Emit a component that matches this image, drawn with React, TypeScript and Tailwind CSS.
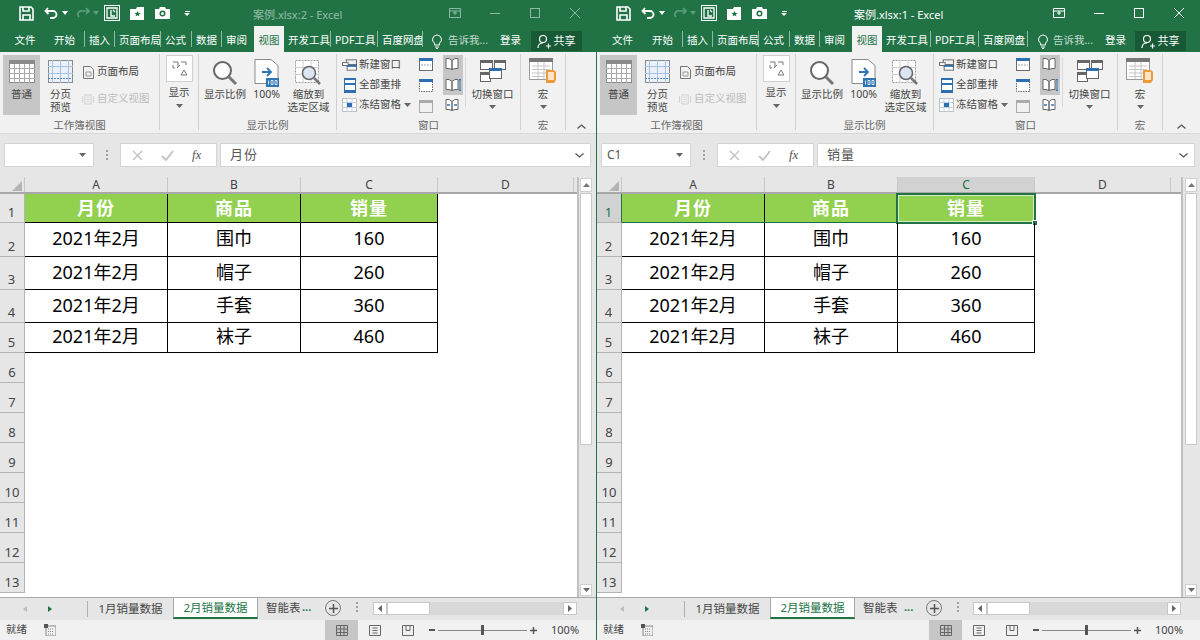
import React from 'react';

const FONT = '"Noto Sans", "Noto Sans CJK SC", sans-serif';

const ROWS = [
  { n: 1, h: 'h-[29px]', cells: ['月份', '商品', '销量'] },
  { n: 2, h: 'h-[34px]', cells: ['2021年2月', '围巾', '160'] },
  { n: 3, h: 'h-[33px]', cells: ['2021年2月', '帽子', '260'] },
  { n: 4, h: 'h-[33px]', cells: ['2021年2月', '手套', '360'] },
  { n: 5, h: 'h-[30px]', cells: ['2021年2月', '袜子', '460'] },
];
const EMPTY_ROWS = [6, 7, 8, 9, 10, 11, 12, 13];
const COL_W = ['w-[143px]', 'w-[133px]', 'w-[137px]'];

const Caret = ({ className = '' }: { className?: string }) => (
  <svg width="7" height="4" viewBox="0 0 7 4" className={className}><path d="M0 0h7L3.5 4z" fill="#666" /></svg>
);

const Save = () => (
  <svg width="15" height="15" viewBox="0 0 15 15" fill="none" stroke="#fff" strokeWidth="1.6">
    <path d="M1 1h11l2 2v11H1z" /><path d="M4 1v4h6V1M4 14V9h7v5" />
  </svg>
);

function TitleBar({ active, title, titleX }: { active: boolean; title: string; titleX: string }) {
  const dim = active ? 'opacity-100' : 'opacity-50';
  return (
    <div className="h-[26px] flex items-center text-white">
      <div className="w-[19px]" />
      <Save />
      <div className="w-[10px]" />
      <svg width="15" height="14" viewBox="0 0 15 14" fill="none" stroke="#fff" strokeWidth="1.8">
        <path d="M4 2L1.5 5 4.5 8M2 5h7a3.5 3.5 0 0 1 0 7H6" />
      </svg>
      <svg width="6" height="4" viewBox="0 0 6 4" className="ml-[3px]"><path d="M0 0h6L3 4z" fill="#fff" /></svg>
      <svg width="14" height="12" viewBox="0 0 14 12" fill="none" stroke="#5d9f7d" strokeWidth="1.6" className="ml-[8px]">
        <path d="M10 1l3 3-3 3M13 4H6a3.5 3.5 0 0 0-3 6" />
      </svg>
      <svg width="6" height="4" viewBox="0 0 6 4" className="ml-[3px]"><path d="M0 0h6L3 4z" fill="#5d9f7d" /></svg>
      <div className="ml-[5px] w-[16px] h-[16px] border border-white flex items-center justify-center">
        <svg width="12" height="12" viewBox="0 0 12 12" fill="none" stroke="#fff" strokeWidth="1.3"><path d="M1 1h10v10H1zM5 3v6h4M7 3l2 2" /></svg>
      </div>
      <svg width="15" height="13" viewBox="0 0 15 13" className="ml-[10px]">
        <path d="M0 2h6l1-2h7v13H0z" fill="#fff" /><path d="M7.5 4l1 2h2l-1.600 1.400.6 2.100-2-1.200-2 1.200.6-2.100L4.500 6h2z" fill="#217346" />
      </svg>
      <svg width="15" height="12" viewBox="0 0 15 12" className="ml-[10px]">
        <path d="M0 2h4l1-2h5l1 2h4v10H0z" fill="#fff" /><circle cx="7.500" cy="6.500" r="3" fill="#217346" /><circle cx="7.500" cy="6.500" r="1.500" fill="#fff" />
      </svg>
      <div className="ml-[14px] flex flex-col items-center gap-[1px]">
        <div className="w-[5px] h-px bg-white" />
        <svg width="6" height="3" viewBox="0 0 6 3"><path d="M0 0h6L3 3z" fill="#fff" /></svg>
      </div>
      <div className={`absolute ${titleX} mt-[5px] text-[11px] whitespace-nowrap ${dim}`}>{title}</div>
      <div className={`ml-auto flex items-center ${dim}`}>
        <svg width="12" height="10" viewBox="0 0 12 10" fill="none" stroke="#fff" className="mr-[29px]">
          <path d="M.5.5h11v9H.5zM.5 3h11M6 3v4M4 5h4" />
        </svg>
        <div className="w-[10px] h-px bg-white mr-[30px]" />
        <div className="w-[10px] h-[10px] border border-white mr-[30px]" />
        <svg width="10" height="10" viewBox="0 0 10 10" stroke="#fff" className="mr-[16px]"><path d="M0 0l10 10M10 0L0 10" /></svg>
      </div>
    </div>
  );
}

function TabRow({ widths, fileW, bulbMl, askMl, shareMl }: { widths: number[]; fileW: string; bulbMl: string; askMl: string; shareMl: string }) {
  const tabs = ['开始', '插入', '页面布局', '公式', '数据', '审阅', '视图', '开发工具', 'PDF工具', '百度网盘'];
  return (
    <div className="h-[26px] flex items-end text-[10.5px] text-white">
      <div className={`${fileW} h-full flex items-center justify-center pt-[4px]`}>文件</div>
      {tabs.map((t, i) => (
        <div
          key={t}
          style={{ width: widths[i] }}
          className={
            t === '视图'
              ? 'h-[26px] pt-[4px] bg-[#f1f1f1] text-[#217346] flex items-center justify-center overflow-hidden'
              : 'h-[26px] pt-[4px] flex items-center pl-[4px] overflow-hidden whitespace-nowrap relative'
          }
        >
          <span className="shrink-0">{t}</span>
          {t !== '视图' && t !== '审阅' && <div className="absolute right-0 top-[5px] h-[16px] w-px bg-[#8fb9a2]" />}
        </div>
      ))}
      <div className={`h-full flex items-center pt-[4px] ${bulbMl}`}>
        <svg width="12" height="15" viewBox="0 0 12 15" fill="none" stroke="#fff"><path d="M6 1a4.500 4.500 0 0 0-2.500 8.200V11h5V9.200A4.500 4.500 0 0 0 6 1zM4 13h4M5 14.500h2" /></svg>
        <span className={`${askMl} text-[#c4dccf]`}>告诉我...</span>
        <span className="ml-[12px]">登录</span>
      </div>
      <div className={`h-[20px] mb-[1px] w-[51px] ${shareMl} bg-[#195a36] flex items-center justify-center gap-[2px]`}>
        <svg width="14" height="15" viewBox="0 0 14 15" fill="none" stroke="#fff" strokeWidth="1.200"><circle cx="6" cy="5" r="3.500" /><path d="M1 14c0-3 2-5 5-5M9 12h5M11.500 9.500v5" /></svg>
        <span className="text-[11px]">共享</span>
      </div>
    </div>
  );
}

const GridIcon = () => (
  <svg width="26" height="23" viewBox="0 0 26 23">
    <rect x=".5" y=".5" width="25" height="22" fill="#fff" stroke="#8a8a8a" />
    <rect x="0" y="0" width="26" height="4" fill="#8a8a8a" />
    <path d="M5.500 4v19M10.500 4v19M15.500 4v19M20.500 4v19M0 8.500h26M0 13.500h26M0 18.500h26" stroke="#a9a9a9" />
  </svg>
);
const PageBreakIcon = () => (
  <svg width="25" height="23" viewBox="0 0 25 23">
    <rect x=".5" y=".5" width="24" height="22" fill="#eaf1fa" stroke="#8a8a8a" />
    <path d="M4.500 0v23M12.500 0v23M20.500 0v23M0 6.500h25M0 13.500h25" stroke="#a8c1e0" />
    <path d="M0 18.500h25" stroke="#5b8ac4" strokeDasharray="2 1" />
  </svg>
);
const SmallPage = () => (
  <svg width="11" height="13" viewBox="0 0 11 13" fill="none" stroke="#777"><path d="M.5.5h7l3 3v9H.5z" /><path d="M3 6h5v4H3z" stroke="#999" /></svg>
);
const CustomView = () => (
  <svg width="13" height="13" viewBox="0 0 13 13" fill="none" stroke="#cfcfcf"><path d="M3 1.500h7v10H3zM.5 3v7M12.500 3v7M5 4h3M5 6.500h3M5 9h3" /></svg>
);
const Magnifier = () => (
  <svg width="26" height="26" viewBox="0 0 26 26" fill="none"><circle cx="10.500" cy="10.500" r="8.500" stroke="#666" strokeWidth="2" fill="#fff" /><path d="M17 17l7 7" stroke="#777" strokeWidth="3" /></svg>
);
const Hundred = () => (
  <svg width="26" height="28" viewBox="0 0 26 28">
    <path d="M1 .5h16l7 6v18H1z" fill="#fff" stroke="#8a8a8a" />
    <path d="M8 13h9M13 9l4 4-4 4" fill="none" stroke="#2f75b5" strokeWidth="1.800" />
    <rect x="12" y="19" width="13" height="9" fill="#2f75b5" />
    <path d="M14.500 21.500v4M17 21.500h2v4h-2zM21 21.500h2v4h-2z" fill="none" stroke="#fff" strokeWidth=".8" />
  </svg>
);
const ZoomSel = () => (
  <svg width="27" height="27" viewBox="0 0 27 27">
    <rect x=".5" y=".5" width="23" height="22" fill="#fff" stroke="#9a9a9a" strokeDasharray="2 1" />
    <path d="M0 7.500h24M0 14.500h24M8 0v23M16 0v23" stroke="#cfcfcf" />
    <circle cx="14" cy="13" r="6.500" fill="#dce6f2" stroke="#666" strokeWidth="1.500" />
    <path d="M19 18l6 6" stroke="#777" strokeWidth="2.500" />
  </svg>
);
const TwoWin = ({ kind }: { kind: number }) => (
  <svg width="14" height="13" viewBox="0 0 14 13">
    <rect x=".5" y=".5" width="13" height="12" fill={kind === 2 ? '#f1f1f1' : '#fff'} stroke={kind === 2 ? '#aaa' : '#6a6a6a'} strokeDasharray={kind === 1 ? '1.500 1' : undefined} />
    <rect x="0" y="0" width="14" height="3" fill={kind === 2 ? '#aaa' : '#2f6fb0'} />
    {kind === 0 && <path d="M2 7h10" stroke="#8aa9cc" strokeDasharray="2 1" />}
  </svg>
);
const Book = ({ mark }: { mark?: string }) => (
  <svg width="16" height="12" viewBox="0 0 16 12" fill="none" stroke="#666">
    <path d="M7 2.500L4 .5H1v10h3l3 1zM7 2.500L10 .5h3v10h-3l-3 1z" fill="#fff" />
    {mark === 'sync' && <path d="M15 0v12M13.800 1.500L15 0l1.200 1.500M13.800 10.500L15 12l1.200-1.500" stroke="#2f75b5" />}
    {mark === 'reset' && <path d="M2 6h3M9 6h3" stroke="#2f75b5" strokeWidth="1.500" />}
  </svg>
);
const NewWin = () => (
  <svg width="16" height="12" viewBox="0 0 16 12" fill="none">
    <rect x="4.500" y=".5" width="11" height="5" stroke="#666" />
    <rect x=".5" y="3.500" width="6" height="3" fill="#fff" stroke="#666" />
    <rect x="5.500" y="6.500" width="10" height="5" fill="#fff" stroke="#666" />
    <rect x="5" y="6" width="11" height="2" fill="#2f6fb0" />
  </svg>
);
const Arrange = () => (
  <svg width="12" height="15" viewBox="0 0 12 15"><rect x=".5" y=".5" width="11" height="14" fill="#fff" stroke="#2f6fb0" /><rect y="5" width="12" height="2" fill="#2f6fb0" /><rect y="12" width="12" height="2" fill="#2f6fb0" /><rect width="12" height="2" fill="#2f6fb0" /></svg>
);
const Freeze = () => (
  <svg width="15" height="14" viewBox="0 0 15 14"><rect x=".5" y=".5" width="14" height="13" fill="#fff" stroke="#888" strokeDasharray="1 1" /><path d="M0 4.500h15M0 9.500h15M5 0v14M10 0v14" stroke="#bdd0e6" /><rect x="5" y="5" width="5" height="4" fill="#2f6fb0" /></svg>
);
const Switch = () => (
  <svg width="26" height="22" viewBox="0 0 26 22">
    <rect x=".5" y=".5" width="12" height="9" fill="#fff" stroke="#666" /><rect width="13" height="3" fill="#666" />
    <rect x="14.500" y=".5" width="11" height="9" fill="#fff" stroke="#666" /><rect x="14" width="12" height="3" fill="#666" />
    <rect x=".5" y="12.500" width="10" height="9" fill="#fff" stroke="#666" /><rect y="12" width="11" height="3" fill="#666" />
    <rect x="9.500" y="8.500" width="12" height="10" fill="#fff" stroke="#666" /><rect x="9" y="8" width="13" height="3" fill="#2f6fb0" />
  </svg>
);
const Macro = () => (
  <svg width="28" height="26" viewBox="0 0 28 26">
    <rect x=".5" y=".5" width="23" height="21" fill="#fff" stroke="#9a9a9a" /><rect width="24" height="4" fill="#777" />
    <path d="M3 8h18M3 11.500h18M3 15h18M3 18.500h12M9 4v17M15 4v17" stroke="#c5c5c5" />
    <path d="M17 12h8l2 2v8l-2 3h-8z" fill="#ed9b3a" />
    <path d="M19 14h6v8h-6z" fill="#fbe3c7" />
  </svg>
);
const Vdiv = () => <div className="w-px h-[76px] bg-[#d0d0d0] mt-[2px] shrink-0" />;

function Big({ w, icon, lines, arrow, top = 'pt-[6px]', labelMt = 'mt-[1px]' }: { w: string; icon: React.ReactNode; lines: string[]; arrow?: boolean; top?: string; labelMt?: string }) {
  return (
    <div className={`${w} h-[66px] flex flex-col items-center shrink-0 ${top}`}>
      <div className="h-[28px] flex items-center justify-center">{icon}</div>
      <div className={`${labelMt} flex flex-col items-center text-[10.5px] leading-[13px] whitespace-nowrap`}>
        {lines.map(l => <span key={l}>{l}</span>)}
        {arrow && <Caret className="mt-[4px]" />}
      </div>
    </div>
  );
}

const GroupLabel = ({ children }: { children: string }) => (
  <div className="absolute bottom-[1px] left-0 right-0 text-center text-[10.5px] leading-[14px] text-[#666]">{children}</div>
);

function SmallBtn({ icon, text, dim, caret, iw, ml }: { icon: React.ReactNode; text: string; dim?: boolean; caret?: boolean; iw: string; ml: string }) {
  return (
    <div className={`h-[20px] flex items-center text-[10.5px] whitespace-nowrap ${dim ? 'text-[#bdbdbd]' : ''}`}>
      <div className={`${iw} flex justify-center`}>{icon}</div>
      <span className={ml}>{text}</span>
      {caret && <Caret className="ml-[3px]" />}
    </div>
  );
}

function Ribbon({ collapseW }: { collapseW: string }) {
  return (
    <div className="h-[82px] bg-[#f1f1f1] flex text-[#444] border-b border-[#d8d8d8]">
      {/* 工作簿视图 */}
      <div className="w-[159px] relative flex pl-[3px] pt-[3px] shrink-0">
        <div className="w-[37px] h-[60px] bg-[#c6c6c6] flex flex-col items-center pt-[5px]">
          <GridIcon />
          <span className="text-[10.5px] leading-[13px] mt-[5px]">普通</span>
        </div>
        <div className="w-[43px] flex flex-col items-center pt-[5px] ml-[-1px]">
          <PageBreakIcon />
          <span className="text-[10.5px] leading-[13px] mt-[5px]">分页</span>
          <span className="text-[10.5px] leading-[13px]">预览</span>
        </div>
        <div className="flex flex-col pt-[7px] gap-[7px]">
          <SmallBtn iw="w-[12px]" ml="ml-[3px]" icon={<SmallPage />} text="页面布局" />
          <SmallBtn iw="w-[12px]" ml="ml-[3px]" icon={<CustomView />} text="自定义视图" dim />
        </div>
        <GroupLabel>工作簿视图</GroupLabel>
      </div>
      <Vdiv />
      {/* 显示 */}
      <div className="w-[38px] flex flex-col items-center pt-[3px] shrink-0">
        <div className="w-[27px] h-[27px] border border-[#d0d0d0] bg-white flex items-center justify-center">
          <svg width="15" height="15" viewBox="0 0 15 15" fill="none" stroke="#777"><path d="M1 1h5v5M3 7l-2 0v-3M9 14l3-5 3 5zM9 1h5v3M8 4l-3 3" /></svg>
        </div>
        <span className="text-[10.5px] leading-[13px] mt-[4px]">显示</span>
        <Caret className="mt-[5px]" />
      </div>
      <Vdiv />
      {/* 显示比例 */}
      <div className="w-[137px] relative flex pt-[1px] pl-[4px] shrink-0">
        <Big w="w-[44px]" icon={<Magnifier />} lines={['显示比例']} />
        <Big w="w-[39px]" icon={<Hundred />} lines={['100%']} />
        <Big w="w-[45px]" icon={<ZoomSel />} lines={['缩放到', '选定区域']} />
        <GroupLabel>显示比例</GroupLabel>
      </div>
      <Vdiv />
      {/* 窗口 */}
      <div className="w-[183px] relative flex pl-[5px] pt-[3px] shrink-0">
        <div className="flex flex-col w-[71px] shrink-0">
          <SmallBtn iw="w-[15px]" ml="ml-[2px]" icon={<NewWin />} text="新建窗口" />
          <SmallBtn iw="w-[15px]" ml="ml-[2px]" icon={<Arrange />} text="全部重排" />
          <SmallBtn iw="w-[15px]" ml="ml-[2px]" icon={<Freeze />} text="冻结窗格" caret />
        </div>
        <div className="flex flex-col w-[25px] items-center shrink-0 pt-[3px] gap-[8px]">
          <TwoWin kind={0} />
          <TwoWin kind={1} />
          <TwoWin kind={2} />
        </div>
        <div className="w-[20px] ml-[5px] flex flex-col shrink-0 items-center">
          <div className="w-full h-[40px] bg-[#c6c6c6] flex flex-col items-center pt-[3px] gap-[9px]">
            <Book />
            <Book mark="sync" />
          </div>
          <div className="mt-[4px]"><Book mark="reset" /></div>
        </div>
        <div className="w-px h-[50px] bg-[#d8d8d8] ml-[2px] mt-[2px]" />
        <Big w="w-[53px]" top="pt-[2px]" labelMt="mt-[3px]" icon={<Switch />} lines={['切换窗口']} arrow />
        <GroupLabel>窗口</GroupLabel>
      </div>
      <Vdiv />
      {/* 宏 */}
      <div className="w-[44px] relative shrink-0 flex justify-center pt-[3px]">
        <Big w="w-[40px]" top="pt-[2px]" labelMt="mt-[3px]" icon={<Macro />} lines={['宏']} arrow />
        <GroupLabel>宏</GroupLabel>
      </div>
      <Vdiv />
      <div className={`${collapseW} flex items-end pb-[4px] justify-center`}>
        <svg width="9" height="5" viewBox="0 0 9 5" fill="none" stroke="#555" strokeWidth="1.300"><path d="M.5 4.500l4-3.500 4 3.500" /></svg>
      </div>
    </div>
  );
}

function FormulaBar({ name, value, inputW }: { name: string; value: string; inputW: string }) {
  return (
    <div className="h-[43px] bg-[#e6e6e6] flex pt-[9px] pl-[4px] shrink-0">
      <div className="w-[90px] h-[24px] bg-white border border-[#d4d4d4] flex items-center justify-between pl-[5px] pr-[7px] text-[12px] text-[#555]">
        <span>{name}</span>
        <Caret />
      </div>
      <div className="w-[26px] flex justify-center items-center h-[24px]">
        <div className="flex flex-col gap-[2px]">
          <div className="w-[2px] h-[2px] bg-[#a0a0a0]" /><div className="w-[2px] h-[2px] bg-[#a0a0a0]" /><div className="w-[2px] h-[2px] bg-[#a0a0a0]" />
        </div>
      </div>
      <div className="w-[97px] h-[24px] bg-white border border-[#d4d4d4] flex items-center">
        <svg width="11" height="11" viewBox="0 0 11 11" stroke="#c2c2c2" strokeWidth="1.300" className="ml-[11px]"><path d="M1 1l9 9M10 1L1 10" /></svg>
        <svg width="13" height="11" viewBox="0 0 13 11" fill="none" stroke="#c2c2c2" strokeWidth="1.800" className="ml-[18px]"><path d="M1 6l4 4 7-9" /></svg>
        <span className="ml-[18px] text-[13px] italic text-[#555] font-['Liberation_Serif',serif]">fx</span>
      </div>
      <div className={`${inputW} h-[24px] ml-[3px] bg-white border border-[#d4d4d4] flex items-center pl-[9px] pr-[6px] text-[13px] text-[#555] justify-between`}>
        <span className="tracking-[1px]">{value}</span>
        <svg width="9" height="5" viewBox="0 0 9 5" fill="none" stroke="#555" strokeWidth="1.300"><path d="M.5.5l4 3.500 4-3.500" /></svg>
      </div>
    </div>
  );
}

function Sheet({ selected, scrollPl }: { selected: boolean; scrollPl: string }) {
  return (
    <div className="flex-1 flex min-h-0 bg-white">
      <div className="flex-1 min-w-0 flex flex-col overflow-hidden">
        <div className="h-[17px] flex bg-[#e6e6e6] border-b-2 border-[#a8a8a8] text-[12px] leading-[16px] text-[#444] shrink-0">
          <div className="w-[25px] border-r border-[#c8c8c8] flex items-end justify-end pr-[2px] pb-[1px]">
            <svg width="10" height="10" viewBox="0 0 10 10"><path d="M10 0v10H0z" fill="#b4b4b4" /></svg>
          </div>
          {['A', 'B', 'C'].map((c, i) => (
            <div key={c} className={`${COL_W[i]} border-r border-[#c8c8c8] text-center ${selected && c === 'C' ? 'bg-[#d2d2d2] text-[#217346]' : ''}`}>{c}</div>
          ))}
          <div className="w-[136px] border-r border-[#c8c8c8] text-center">D</div>
        </div>
        {ROWS.map(r => (
          <div key={r.n} className={`${r.h} flex shrink-0`}>
            <div className={`w-[25px] border-r border-b border-[#b4b4b4] flex items-end justify-center text-[13px] leading-[20px] pr-[1px] ${selected && r.n === 1 ? 'bg-[#d2d2d2] text-[#217346] border-r-[#217346]' : 'bg-[#e6e6e6] text-[#444]'}`}>{r.n}</div>
            {r.cells.map((c, i) => (
              <div
                key={i}
                className={`${COL_W[i]} relative flex items-center justify-center border-r border-b text-[18px] ${selected && r.n === 1 ? 'border-b-[#1f6b42]' : ''} ${r.n === 1 ? 'bg-[#92d050] text-white font-bold tracking-[1px] border-black' : 'text-black border-black pb-[2px]'}`}
              >
                {c}
                {selected && r.n === 1 && i === 2 && (
                  <>
                    <div className="absolute left-[-2px] right-[-2px] top-[-1px] bottom-[-2px] border-2 border-[#217346]" />
                    <div className="absolute left-[0px] right-[0px] top-[1px] bottom-[0px] border border-[#d5ecc0]" />
                    <div className="absolute right-[-4px] bottom-[-4px] w-[6px] h-[6px] bg-[#217346] border border-white" />
                  </>
                )}
              </div>
            ))}
          </div>
        ))}
        {EMPTY_ROWS.map(n => (
          <div key={n} className="h-[30px] flex shrink-0">
            <div className="w-[25px] bg-[#e6e6e6] border-r border-b border-[#b4b4b4] flex items-end justify-center text-[13px] leading-[20px] text-[#444]">{n}</div>
          </div>
        ))}
      </div>
      <div className={`w-[19px] bg-[#e6e6e6] border-l-2 border-[#c0c0c0] flex flex-col shrink-0 pt-[1px] ${scrollPl}`}>
        <div className="h-[14px] w-[12px] bg-white border border-[#d0d0d0] flex items-center justify-center">
          <svg width="7" height="4" viewBox="0 0 7 4"><path d="M0 4h7L3.500 0z" fill="#777" /></svg>
        </div>
        <div className="mt-[1px] h-[252px] w-[12px] bg-white border border-[#c8c8c8]" />
        <div className="mt-auto mb-[1px] h-[12px] w-[12px] bg-white border border-[#d0d0d0] flex items-center justify-center">
          <Caret />
        </div>
      </div>
    </div>
  );
}

function SheetTabs({ thirdW, dotsW, plusW, trackW }: { thirdW: string; dotsW: string; plusW: string; trackW: string }) {
  return (
    <div className="h-[23px] bg-[#e6e6e6] flex text-[11.5px] text-[#444] shrink-0 border-t border-[#a8a8a8]">
      <div className="w-[88px] flex items-center shrink-0 border-r border-[#b0b0b0] my-[3px]">
        <svg width="4" height="6" viewBox="0 0 4 6" className="ml-[23px]"><path d="M4 0v6L0 3z" fill="#bdbdbd" /></svg>
        <svg width="4" height="6" viewBox="0 0 4 6" className="ml-[21px]"><path d="M0 0v6l4-3z" fill="#217346" /></svg>
      </div>
      <div className="w-[85px] flex items-center justify-center shrink-0">1月销量数据</div>
      <div className="w-[85px] h-[21px] bg-white border-x border-[#a8a8a8] border-b-2 border-b-[#217346] text-[#217346] flex items-center justify-center shrink-0">2月销量数据</div>
      <div className={`${thirdW} flex items-center pl-[8px] whitespace-nowrap overflow-hidden shrink-0 h-[20px]`}>智能表</div>
      <span className={`${dotsW} pl-[2px] text-[11px] text-[#217346] font-bold leading-[18px] shrink-0`}>...</span>
      <div className="w-[16px] h-[16px] rounded-full border border-[#777] flex items-center justify-center mt-[2px] shrink-0">
        <svg width="9" height="9" viewBox="0 0 9 9" stroke="#555" strokeWidth="1.500"><path d="M4.500 0v9M0 4.500h9" /></svg>
      </div>
      <div className={`${plusW} flex justify-center shrink-0`}>
        <div className="flex flex-col gap-[2px] mt-[4px]">
          <div className="w-[2px] h-[2px] bg-[#a0a0a0]" /><div className="w-[2px] h-[2px] bg-[#a0a0a0]" /><div className="w-[2px] h-[2px] bg-[#a0a0a0]" />
        </div>
      </div>
      <div className={`${trackW} h-[13px] mt-[4px] bg-[#d8d8d8] flex shrink-0`}>
        <div className="w-[14px] bg-white border border-[#c8c8c8] flex items-center justify-center">
          <svg width="4" height="7" viewBox="0 0 4 7"><path d="M4 0v7L0 3.500z" fill="#666" /></svg>
        </div>
        <div className="w-[43px] bg-white border border-[#c8c8c8]" />
        <div className="ml-auto w-[14px] bg-white border border-[#c8c8c8] flex items-center justify-center">
          <svg width="4" height="7" viewBox="0 0 4 7"><path d="M0 0v7l4-3.500z" fill="#666" /></svg>
        </div>
      </div>
    </div>
  );
}

function StatusBar() {
  return (
    <div className="h-[20px] bg-[#f1f1f1] flex items-center text-[11px] text-[#444] shrink-0 mt-auto">
      <span className="ml-[6px] text-[10.5px]">就绪</span>
      <svg width="12" height="12" viewBox="0 0 12 12" className="ml-[17px]"><rect x="2" y="2" width="10" height="10" fill="none" stroke="#888" /><rect width="4" height="4" fill="#555" /><path d="M4 5h6M4 7.500h6M4 10h6" stroke="#888" strokeDasharray="1 1" /></svg>
      <div className="flex-1" />
      <div className="w-[33px] h-[20px] bg-[#c6c6c6] flex items-center justify-center">
        <svg width="12" height="11" viewBox="0 0 12 11" fill="none" stroke="#666"><path d="M.5.5h11v10H.5zM4.500 0v11M8 0v11M0 4h12M0 7.500h12" /></svg>
      </div>
      <div className="w-[33px] flex justify-center">
        <svg width="12" height="11" viewBox="0 0 12 11" fill="none" stroke="#666"><path d="M.5.5h11v10H.5zM3.500 3h5M3.500 5.500h5M3.500 8h5" /></svg>
      </div>
      <div className="w-[33px] flex justify-center">
        <svg width="12" height="11" viewBox="0 0 12 11" fill="none" stroke="#666"><path d="M.5.5h11v10H.5zM4 .5v5h4v-5" /></svg>
      </div>
      <div className="w-[6px] h-[2px] bg-[#555] ml-[5px]" />
      <div className="w-[89px] h-px bg-[#888] relative mx-[3px]">
        <div className="absolute left-[43px] top-[-5px] w-[3px] h-[10px] bg-[#555]" />
      </div>
      <svg width="7" height="7" viewBox="0 0 7 7" stroke="#555" strokeWidth="1.500"><path d="M3.500 0v7M0 3.500h7" /></svg>
      <span className="ml-[14px] mr-[16px] w-[29px]">100%</span>
    </div>
  );
}

function ExcelWindow(props: {
  active: boolean; title: string; titleX: string; widths: number[]; fileW: string; bulbMl: string; askMl: string; shareMl: string;
  name: string; value: string; width: string; collapseW: string; inputW: string; scrollPl: string;
  thirdW: string; dotsW: string; plusW: string; trackW: string; selected: boolean;
}) {
  return (
    <div className={`${props.width} h-[640px] relative flex flex-col shrink-0 overflow-hidden`}>
      <div className="bg-[#217346]">
        <TitleBar active={props.active} title={props.title} titleX={props.titleX} />
        <TabRow widths={props.widths} fileW={props.fileW} bulbMl={props.bulbMl} askMl={props.askMl} shareMl={props.shareMl} />
      </div>
      <Ribbon collapseW={props.collapseW} />
      <FormulaBar name={props.name} value={props.value} inputW={props.inputW} />
      <Sheet selected={props.selected} scrollPl={props.scrollPl} />
      <SheetTabs thirdW={props.thirdW} dotsW={props.dotsW} plusW={props.plusW} trackW={props.trackW} />
      <StatusBar />
    </div>
  );
}

export default function App() {
  return (
    <div className="w-[1200px] h-[640px] flex overflow-hidden bg-white" style={{ fontFamily: FONT }}>
      <ExcelWindow
        active={false} title="案例.xlsx:2 - Excel" titleX="left-[253px]" name="" value="月份"
        widths={[35, 30, 46, 31, 30, 32, 30, 47, 47, 45]} fileW="w-[50px]"
        bulbMl="ml-[8px]" askMl="ml-[5px]" shareMl="ml-[10px]"
        width="w-[596px]" collapseW="w-[36px]" inputW="w-[371px]" scrollPl="pl-[1px]"
        thirdW="w-[42px]" dotsW="w-[25px]" plusW="w-[32px]" trackW="w-[204px]" selected={false}
      />
      <div className="w-px h-[640px] bg-[#217346] shrink-0" />
      <ExcelWindow
        active title="案例.xlsx:1 - Excel" titleX="left-[257px]" name="C1" value="销量"
        widths={[35, 30, 46, 31, 30, 32, 30, 49, 48, 49]} fileW="w-[51px]"
        bulbMl="ml-[9px]" askMl="ml-[4px]" shareMl="ml-[9px]"
        width="w-[603px]" collapseW="w-[48px]" inputW="w-[378px]" scrollPl="pl-[2px]"
        thirdW="w-[47px]" dotsW="w-[24px]" plusW="w-[31px]" trackW="w-[208px]" selected
      />
    </div>
  );
}
